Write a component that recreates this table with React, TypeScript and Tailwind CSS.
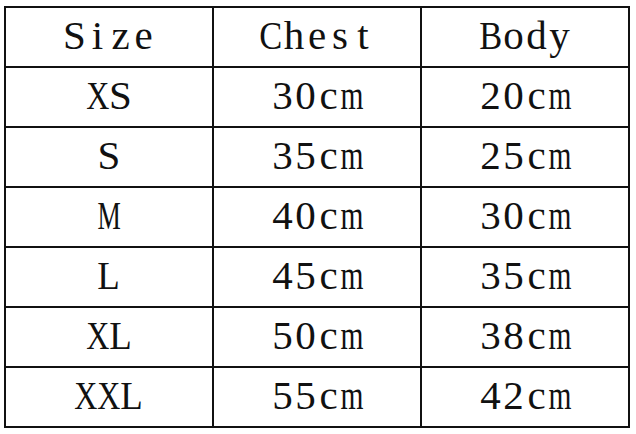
const rows = [
  ["Size", "Chest", "Body"],
  ["XS", "30cm", "20cm"],
  ["S", "35cm", "25cm"],
  ["M", "40cm", "30cm"],
  ["L", "45cm", "35cm"],
  ["XL", "50cm", "38cm"],
  ["XXL", "55cm", "42cm"],
];

// wide Times glyphs get squeezed into the half-width cell
const squeeze: Record<string, string> = {
  X: "scale-x-[0.78]",
  M: "scale-x-[0.64]",
  L: "scale-x-[0.9]",
  C: "scale-x-[0.84]",
  B: "scale-x-[0.84]",
  m: "scale-x-[0.72]",
};

// SimSun-style half-width latin: every glyph sits in a fixed 23px cell
function MonoText({ text }: { text: string }) {
  return (
    <span className="flex">
      {text.split("").map((ch, i) => (
        <span key={i} className="flex w-[23px] justify-center">
          <span className={`inline-block ${squeeze[ch] ?? ""}`}>{ch}</span>
        </span>
      ))}
    </span>
  );
}

export default function App() {
  return (
    <div className="h-[434px] w-[636px] bg-white pl-[4px] pt-[6px]">
      <div className="grid w-[626px] grid-cols-3 gap-[2px] bg-[#111] p-[2px]">
        {rows.map((row, r) =>
          row.map((cell, c) => (
            <div
              key={`${r}-${c}`}
              className="flex h-[58px] items-center justify-center bg-white pb-[3px] [font-family:'Liberation_Serif',serif] text-[41px] leading-none text-[#111]"
            >
              <MonoText text={cell} />
            </div>
          ))
        )}
      </div>
    </div>
  );
}
